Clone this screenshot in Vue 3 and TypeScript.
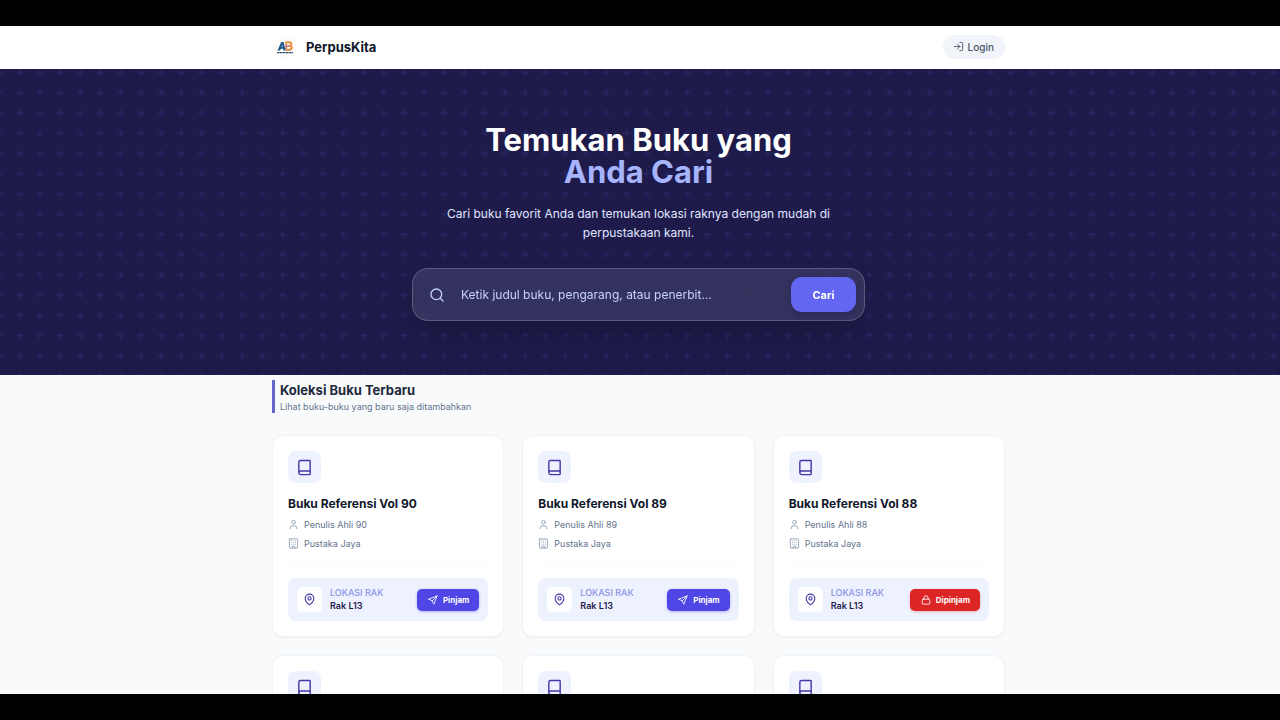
<script setup lang="ts">
import { ref } from 'vue'

interface Book {
  volume: number
  borrowed: boolean
}

const query = ref('')
const books: Book[] = [
  { volume: 90, borrowed: false },
  { volume: 89, borrowed: false },
  { volume: 88, borrowed: true },
  { volume: 87, borrowed: false },
  { volume: 86, borrowed: false },
  { volume: 85, borrowed: false },
]
</script>

<template>
  <div class="frame">
    <div class="page">
      <header class="topbar">
        <div class="container topbar-row">
          <a class="brand" href="#">
            <svg class="brand-logo" viewBox="0 0 26 26" aria-hidden="true">
              <circle cx="13" cy="13" r="12" fill="#fdfcfa" />
              <path d="M5.500 16.500 9.200 8h2.400l2.200 8.500h-2.400l-.4-1.700H8.900l-.8 1.700zM9.700 13h1l-.3-2z" fill="#24598c" />
              <path d="M13 9.200C14.500 7.900 19.500 7.600 19.300 10c0 1-.6 1.600-1.300 1.900 1.300.3 1.900 1.100 1.700 2.100-.3 2-3.200 2.300-5.500 1.700" fill="none" stroke="#ee8e3b" stroke-width="2" />
              <path d="M13.800 12.200h4M14.200 10v5.500" stroke="#c57358" stroke-width="1.500" />
              <path d="M5 18.700h16" stroke="#31506e" stroke-width="1.200" stroke-dasharray="2.500 .4" />
            </svg>
            <span>PerpusKita</span>
          </a>
          <button class="login" type="button">
            <svg class="icon-m" viewBox="0 0 24 24" aria-hidden="true"><path d="M15 3h4a2 2 0 0 1 2 2v14a2 2 0 0 1-2 2h-4M10 17l5-5-5-5M15 12H3" /></svg>
            Login
          </button>
        </div>
      </header>

      <section class="hero">
        <svg class="hero-pattern" aria-hidden="true">
          <defs>
            <pattern id="plus" width="30" height="30" patternUnits="userSpaceOnUse" patternTransform="translate(9.500 -6.500) scale(.6742)">
              <path d="M15 9.500v11M9.500 15h11" stroke="#6366f1" stroke-width="2" />
            </pattern>
          </defs>
          <rect width="100%" height="100%" fill="url(#plus)" stroke="none" />
        </svg>
        <div class="hero-body">
          <h1>Temukan Buku yang<br /><span>Anda Cari</span></h1>
          <p>Cari buku favorit Anda dan temukan lokasi raknya dengan mudah di perpustakaan kami.</p>
          <form class="search" role="search" @submit.prevent>
            <svg class="icon-search" viewBox="0 0 24 24" aria-hidden="true"><circle cx="11" cy="11" r="8" /><path d="m21 21-4.300-4.300" /></svg>
            <input v-model="query" type="text" aria-label="Cari buku" placeholder="Ketik judul buku, pengarang, atau penerbit..." />
            <button type="submit">Cari</button>
          </form>
        </div>
      </section>

      <main class="container">
        <div class="heading">
          <h2>Koleksi Buku Terbaru</h2>
          <p>Lihat buku-buku yang baru saja ditambahkan</p>
        </div>
        <div class="grid">
          <article v-for="book in books" :key="book.volume" class="card">
            <div class="cover">
              <svg class="icon-book" viewBox="0 0 24 24" aria-hidden="true"><path d="M4 19.500v-15A2.500 2.500 0 0 1 6.500 2H19a1 1 0 0 1 1 1v18a1 1 0 0 1-1 1H6.500a2.500 2.500 0 0 1 0-5H20" /></svg>
            </div>
            <h3>Buku Referensi Vol {{ book.volume }}</h3>
            <p class="meta">
              <svg class="icon-m" viewBox="0 0 24 24" aria-hidden="true"><path d="M19 21v-2a4 4 0 0 0-4-4H9a4 4 0 0 0-4 4v2" /><circle cx="12" cy="7" r="4" /></svg>
              Penulis Ahli {{ book.volume }}
            </p>
            <p class="meta">
              <svg class="icon-m" viewBox="0 0 24 24" aria-hidden="true"><rect x="3" y="2" width="18" height="20" rx="1" /><path d="M9 22v-4h6v4M8 6h.01M12 6h.01M16 6h.01M8 10h.01M12 10h.01M16 10h.01M8 14h.01M12 14h.01M16 14h.01" /></svg>
              Pustaka Jaya
            </p>
            <div class="shelf">
              <div class="pin">
                <svg class="icon-pin" viewBox="0 0 24 24" aria-hidden="true"><path d="M20 10c0 6-8 12-8 12s-8-6-8-12a8 8 0 0 1 16 0Z" /><circle cx="12" cy="10" r="3" /></svg>
              </div>
              <div class="place">
                <span class="place-label">LOKASI RAK</span>
                <span class="place-name">Rak L13</span>
              </div>
              <button class="action" :class="{ borrowed: book.borrowed }" type="button">
                <svg v-if="book.borrowed" class="icon-s" viewBox="0 0 24 24" aria-hidden="true"><rect x="3" y="10" width="18" height="12" rx="2" /><path d="M7 10V7a5 5 0 0 1 10 0v3" /></svg>
                <svg v-else class="icon-s" viewBox="0 0 24 24" aria-hidden="true"><path d="m2 10 20-8-8 20-4-8-8-4ZM22 2 10 14" /></svg>
                {{ book.borrowed ? 'Dipinjam' : 'Pinjam' }}
              </button>
            </div>
          </article>
        </div>
      </main>
    </div>
  </div>
</template>

<style>
body {
  margin: 0;
  background: #000;
}
</style>

<style scoped>
.frame {
  box-sizing: border-box;
  height: 100vh;
  padding: 26px 0;
  background: #000;
  font-family: Inter, "Liberation Sans", sans-serif;
}
.frame * {
  box-sizing: border-box;
}
.page {
  height: 100%;
  overflow: hidden;
  background: #f8fafc;
}
h1, h2, h3, p {
  margin: 0;
}
button, input {
  font: inherit;
  border: 0;
}
svg {
  flex: none;
  fill: none;
  stroke: currentColor;
  stroke-width: 2;
  stroke-linecap: round;
  stroke-linejoin: round;
}
.topbar,
main {
  padding-right: 3px;
}
.container {
  max-width: 733px;
  margin: 0 auto;
}
main.container {
  max-width: 736px;
}
.topbar {
  background: #fff;
}
.topbar-row {
  display: flex;
  align-items: center;
  justify-content: space-between;
  height: 43px;
  padding-bottom: 2px;
}
.brand {
  display: flex;
  align-items: center;
  gap: 8px;
  color: #0f172a;
  font-size: 13px;
  font-weight: 700;
  text-decoration: none;
}
.brand-logo {
  width: 26px;
  height: 26px;
  stroke: none;
  stroke-linecap: butt;
}
.login {
  display: flex;
  align-items: center;
  gap: 4px;
  height: 24px;
  padding: 0 11px 0 10px;
  border-radius: 12px;
  background: #f1f5f9;
  color: #475569;
  font-size: 10px;
  font-weight: 500;
}
.icon-m {
  width: 11px;
  height: 11px;
}
.hero {
  position: relative;
  padding: 55px 3px 54px 0;
  background: #1e1b4b;
}
.hero-pattern {
  position: absolute;
  inset: 0;
  width: 100%;
  height: 100%;
  opacity: 0.15;
  stroke-linecap: butt;
}
.hero-body {
  position: relative;
  display: flex;
  flex-direction: column;
  align-items: center;
  max-width: 453px;
  margin: 0 auto;
  text-align: center;
}
h1 {
  color: #fff;
  font-size: 31px;
  line-height: 32px;
  font-weight: 700;
}
h1 span {
  color: #a5b4fc;
}
.hero p {
  max-width: 400px;
  margin: 16px 0 26px;
  color: #e0e7ff;
  font-size: 12px;
  line-height: 19px;
}
.search {
  display: flex;
  align-items: center;
  align-self: stretch;
  gap: 16px;
  height: 53px;
  padding: 8px 8px 8px 16px;
  border: 1px solid rgba(255, 255, 255, 0.2);
  border-radius: 16px;
  background: rgba(255, 255, 255, 0.1);
  backdrop-filter: blur(8px);
  box-shadow: 0 16px 32px -8px rgba(0, 0, 0, 0.25);
}
.icon-search {
  width: 16px;
  height: 16px;
  color: #c7d2fe;
}
.search input {
  flex: 1;
  min-width: 0;
  padding: 0;
  outline: 0;
  background: transparent;
  color: #fff;
  font-size: 12px;
}
.search input::placeholder {
  color: #c7d2fe;
  opacity: 1;
}
.search button {
  width: 65px;
  height: 35px;
  border-radius: 11px;
  background: #6366f1;
  color: #fff;
  font-size: 11px;
  font-weight: 700;
  box-shadow: 0 4px 8px rgba(30, 27, 75, 0.4);
}
.heading {
  margin: 5px 0 22px;
  padding-left: 5px;
  border-left: 3px solid #6366c8;
}
h2 {
  color: #1e293b;
  font-size: 13px;
  line-height: 20px;
  font-weight: 700;
}
.heading p {
  color: #64748b;
  font-size: 9px;
  line-height: 13px;
}
.grid {
  display: grid;
  grid-template-columns: repeat(3, 1fr);
  gap: 18px;
}
.card {
  padding: 15px;
  border: 1px solid #f1f5f9;
  border-radius: 11px;
  background: #fff;
  box-shadow: 0 1px 2px rgba(15, 23, 42, 0.05);
}
.cover {
  display: grid;
  place-items: center;
  width: 33px;
  height: 32px;
  margin-bottom: 11px;
  border-radius: 8px;
  background: #eef2ff;
  color: #4338a8;
}
.icon-book {
  width: 17px;
  height: 17px;
}
h3 {
  margin-bottom: 2px;
  color: #0f172a;
  font-size: 12px;
  line-height: 19px;
  font-weight: 700;
}
.meta {
  display: flex;
  align-items: center;
  gap: 5px;
  color: #64748b;
  font-size: 9px;
  line-height: 19px;
}
.meta svg {
  color: #94a3b8;
}
.shelf {
  position: relative;
  display: flex;
  align-items: center;
  height: 43px;
  margin-top: 25px;
  padding: 0 9px;
  border-radius: 8px;
  background: #eef2ff;
}
.shelf::before {
  content: "";
  position: absolute;
  inset: -12px 0 auto;
  border-top: 1px solid #f8fafc;
}
.pin {
  display: grid;
  place-items: center;
  width: 25px;
  height: 25px;
  margin-right: 8px;
  border-radius: 5px;
  background: #fff;
  color: #4338a8;
}
.icon-pin {
  width: 13px;
  height: 13px;
}
.place {
  display: flex;
  flex: 1;
  flex-direction: column;
  padding-bottom: 2px;
  line-height: 13px;
}
.place-label {
  color: #8b93e6;
  font-size: 9px;
  font-weight: 500;
}
.place-name {
  color: #1e1b4b;
  font-size: 9px;
  font-weight: 600;
}
.action {
  display: flex;
  align-items: center;
  gap: 5px;
  height: 22px;
  padding: 0 10px 0 11px;
  border-radius: 5px;
  background: #4f46e5;
  color: #fff;
  font-size: 8px;
  font-weight: 700;
  box-shadow: 0 1px 3px rgba(79, 70, 229, 0.4);
}
.action.borrowed {
  background: #dc2626;
  box-shadow: 0 1px 3px rgba(220, 38, 38, 0.3);
}
.icon-s {
  width: 10px;
  height: 10px;
}
</style>
